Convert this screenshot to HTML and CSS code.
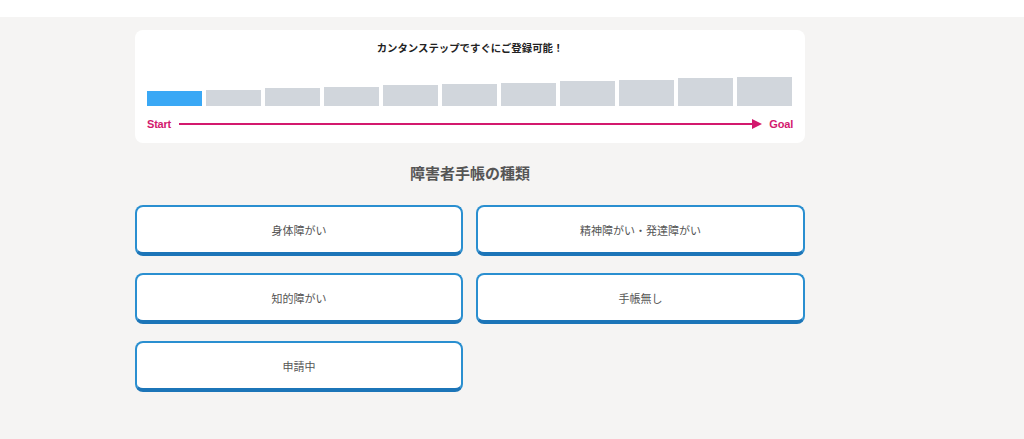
FILE: index.html
```html
<!DOCTYPE html>
<html lang="ja">
<head>
<meta charset="utf-8">
<link rel="stylesheet" href="styles.css">
</head>
<body>
<div class="topbar"></div>
<main class="main">
  <section class="card">
    <p class="card-title">カンタンステップですぐにご登録可能！</p>
    <div class="bars">
      <span class="bar bar-active" style="height:15px"></span>
      <span class="bar" style="height:16px"></span>
      <span class="bar" style="height:18px"></span>
      <span class="bar" style="height:19px"></span>
      <span class="bar" style="height:21px"></span>
      <span class="bar" style="height:22px"></span>
      <span class="bar" style="height:23px"></span>
      <span class="bar" style="height:25px"></span>
      <span class="bar" style="height:26px"></span>
      <span class="bar" style="height:28px"></span>
      <span class="bar" style="height:29px"></span>
    </div>
    <div class="progress-row">
      <span class="label">Start</span>
      <span class="arrow"><span class="arrow-line"></span><span class="arrow-head"></span></span>
      <span class="label">Goal</span>
    </div>
  </section>
  <h2 class="heading">障害者手帳の種類</h2>
  <div class="options">
    <button class="option">身体障がい</button>
    <button class="option">精神障がい・発達障がい</button>
    <button class="option">知的障がい</button>
    <button class="option">手帳無し</button>
    <button class="option">申請中</button>
  </div>
</main>
</body>
</html>
```

FILE: styles.css
```css
* { box-sizing: border-box; }
html, body { margin: 0; padding: 0; }
body {
  background: #f5f4f3;
  font-family: "Noto Sans CJK JP", "Noto Sans", sans-serif;
  width: 1024px;
  height: 439px;
  overflow: hidden;
}
.topbar { height: 17px; background: #ffffff; }
.main {
  width: 670px;
  margin-left: 135px;
  padding-top: 13px;
}
.card {
  background: #ffffff;
  border-radius: 8px;
  padding: 10px 12px 12px;
}
.card-title {
  margin: 0;
  text-align: center;
  font-size: 10.4px;
  line-height: 16px;
  font-weight: 700;
  color: #222;
}
.bars {
  display: flex;
  align-items: flex-end;
  gap: 4px;
  height: 29px;
  margin-top: 21px;
}
.bar {
  flex: 0 0 55px;
  background: #d1d6dc;
}
.bar-active { background: #3aa8f5; }
.progress-row {
  display: flex;
  align-items: center;
  height: 14px;
  margin-top: 11px;
}
.label {
  font-family: "Liberation Sans", Arial, sans-serif;
  font-weight: 700;
  font-size: 11px;
  color: #d3196e;
  letter-spacing: -0.2px;
}
.arrow {
  flex: 1;
  display: flex;
  align-items: center;
  margin: 0 7px 0 8px;
}
.arrow-line {
  flex: 1;
  height: 1.5px;
  background: #d3196e;
}
.arrow-head {
  width: 0;
  height: 0;
  border-top: 5px solid transparent;
  border-bottom: 5px solid transparent;
  border-left: 10px solid #d3196e;
}
.heading {
  margin: 19px 0 0;
  text-align: center;
  font-size: 15px;
  line-height: 22px;
  font-weight: 700;
  color: #555;
}
.options {
  display: grid;
  grid-template-columns: 328px 329px;
  column-gap: 13px;
  row-gap: 17px;
  margin-top: 21px;
}
.option {
  height: 51px;
  background: #ffffff;
  border: 2px solid #2a8fd0;
  border-bottom: 4px solid #1c75b8;
  border-radius: 8px;
  font-family: "Noto Sans CJK JP", "Noto Sans", sans-serif;
  font-size: 11px;
  color: #555;
  padding: 0;
}
```
